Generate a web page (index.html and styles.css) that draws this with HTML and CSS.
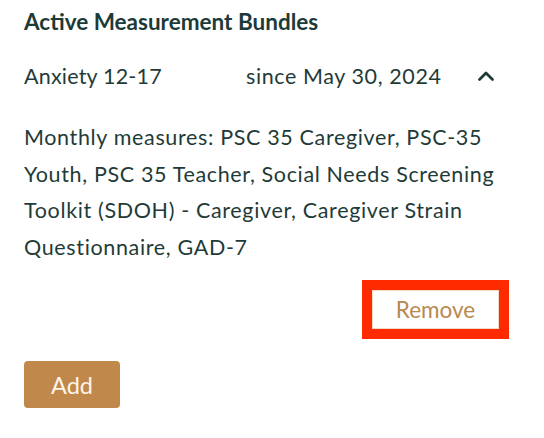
FILE: index.html
```html
<!DOCTYPE html>
<html>
<head>
<meta charset="utf-8">
<link rel="stylesheet" href="styles.css">
</head>
<body>
<section class="panel">
  <h2 class="title">Active Measurement Bundles</h2>
  <div class="bundle-row">
    <span class="bundle-name">Anxiety 12-17</span>
    <span class="bundle-date">since May 30, 2024</span>
    <svg class="chevron" width="18" height="12" viewBox="0 0 18 12"><path d="M2.5 9.5 L9 3 L15.5 9.5" fill="none" stroke="#1f3b38" stroke-width="2.8" stroke-linecap="round" stroke-linejoin="round"/></svg>
  </div>
  <p class="measures">Monthly measures: PSC 35 Caregiver, PSC-35 Youth, PSC 35 Teacher, Social Needs Screening Toolkit (SDOH) - Caregiver, Caregiver Strain Questionnaire, GAD-7</p>
  <div class="actions">
    <span class="highlight"><button class="btn-remove">Remove</button></span>
  </div>
  <button class="btn-add">Add</button>
</section>
</body>
</html>
```

FILE: styles.css
```css
html, body {
  margin: 0;
  padding: 0;
  background: #ffffff;
}
body {
  font-family: Lato, "Noto Sans", sans-serif;
  color: #1f3b38;
}
.panel {
  padding: 8px 0 0 24px;
  width: 485px;
}
.title {
  margin: 0;
  font-size: 22.5px;
  font-weight: 700;
  line-height: 28px;
  color: #1c3a37;
  letter-spacing: 0;
}
.bundle-row {
  display: flex;
  align-items: center;
  margin-top: 26px;
  font-size: 21.5px;
  line-height: 28px;
}
.bundle-name {
  width: 222px;
  letter-spacing: 0.2px;
}
.bundle-date {
  width: 231px;
  letter-spacing: 0.6px;
}
.chevron {
  display: block;
}
.measures {
  margin: 29px 0 0 0;
  font-size: 21.5px;
  line-height: 36.5px;
  letter-spacing: 0.65px;
  width: 485px;
}
.actions {
  display: flex;
  justify-content: flex-end;
  margin-top: 15px;
}
.highlight {
  display: inline-block;
  border: 10px solid #ff2a00;
}
.btn-remove {
  display: block;
  width: 127px;
  height: 39px;
  border: 1px solid #ecdcc8;
  background: #ffffff;
  color: #b9884f;
  font-family: Lato, "Noto Sans", sans-serif;
  font-size: 22.5px;
  padding: 0;
}
.btn-add {
  display: block;
  margin-top: 22px;
  width: 96px;
  height: 47px;
  border: none;
  border-radius: 4px;
  background: #c0884a;
  color: #fdf4ea;
  font-family: Lato, "Noto Sans", sans-serif;
  font-size: 23.5px;
  padding: 0;
}
```
